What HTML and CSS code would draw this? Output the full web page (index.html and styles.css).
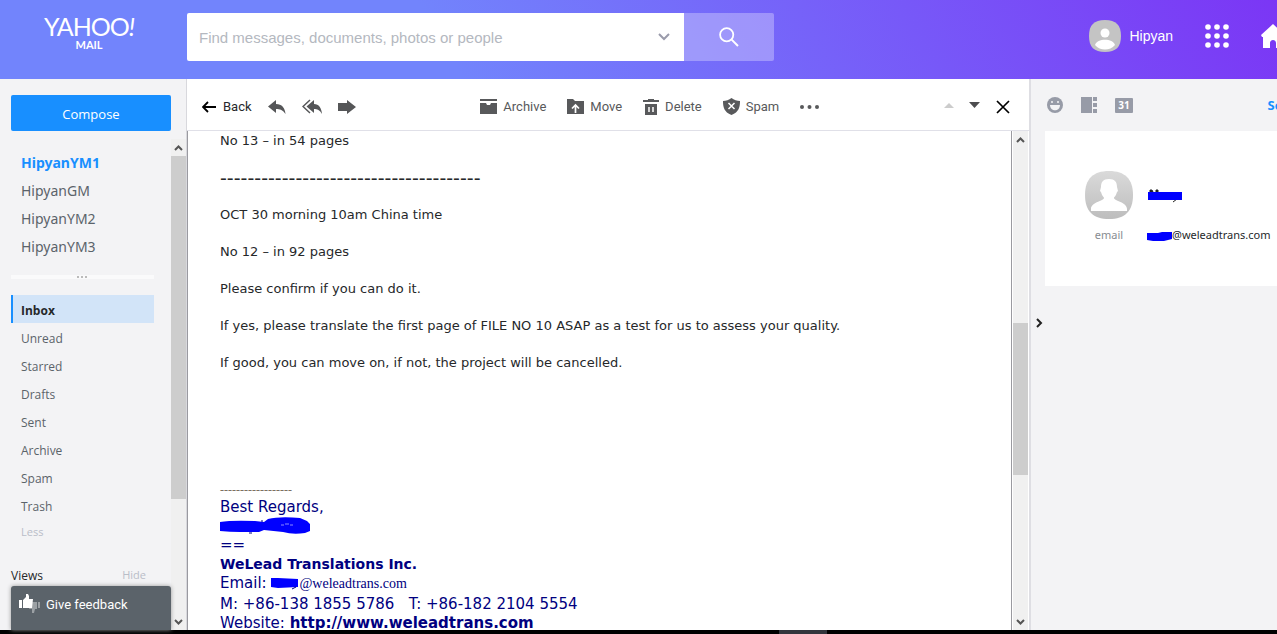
FILE: index.html
```html
<!DOCTYPE html>
<html lang="en">
<head>
  <meta charset="UTF-8" />
  <meta name="viewport" content="width=device-width, initial-scale=1.0" />
  <title>Yahoo Mail</title>
  <link rel="stylesheet" href="styles.css">
</head>
<body>
  <header class="topbar">
    <a class="logo" href="#">
      <span class="logo-name">YAHOO<i>!</i></span>
      <span class="logo-sub">MAIL</span>
    </a>
    <form class="search">
      <input type="text" aria-label="Search" placeholder="Find messages, documents, photos or people">
      <button type="button" class="search-options" aria-label="Search options">
        <svg width="12" height="8" viewBox="0 0 12 8"><path d="M1 1l5 5 5-5" fill="none" stroke="#9a9bab" stroke-width="2"/></svg>
      </button>
      <button type="button" class="search-go" aria-label="Search">
        <svg width="20" height="20" viewBox="0 0 20 20" fill="none" stroke="#fff" stroke-width="1.8"><circle cx="7.7" cy="7.7" r="6.6"/><path d="M12.4 12.4l6.6 6.6" stroke-width="2"/></svg>
      </button>
    </form>
    <div class="account">
      <a class="user" href="#">
        <svg width="32" height="32" viewBox="0 0 32 32"><path d="M16 0C27 0 32 5 32 16S27 32 16 32 0 27 0 16 5 0 16 0z" fill="#c4c4c4"/><circle cx="16" cy="13" r="4.5" fill="#fff"/><path d="M6 25c2-7 18-7 20 0-5 6-15 6-20 0z" fill="#fff"/></svg>
        <span>Hipyan</span>
      </a>
      <button type="button" class="apps" aria-label="Apps">
        <svg width="24" height="24" viewBox="0 0 24 24" fill="#fff"><circle cx="3" cy="3" r="2.800"/><circle cx="12" cy="3" r="2.800"/><circle cx="21" cy="3" r="2.800"/><circle cx="3" cy="12" r="2.800"/><circle cx="12" cy="12" r="2.800"/><circle cx="21" cy="12" r="2.800"/><circle cx="3" cy="21" r="2.800"/><circle cx="12" cy="21" r="2.800"/><circle cx="21" cy="21" r="2.800"/></svg>
      </button>
      <a class="home" href="#" aria-label="Home">
        <svg width="24" height="24" viewBox="0 0 24 24"><path d="M12 0L0 11l1 2h1v11h7v-5c0-4 6-4 6 0v5h7V13h1l1-2z" fill="#fff"/></svg>
      </a>
    </div>
  </header>

  <div class="columns">
    <aside class="sidebar">
      <button type="button" class="compose">Compose</button>
      <div class="folders">
        <nav class="folder-list">
          <ul class="mailboxes">
            <li><a class="current" href="#">HipyanYM1</a></li>
            <li><a href="#">HipyanGM</a></li>
            <li><a href="#">HipyanYM2</a></li>
            <li><a href="#">HipyanYM3</a></li>
          </ul>
          <div class="handle"><svg width="11" height="3" viewBox="0 0 11 3" fill="#bbb"><path d="M0 0h2v2H0zM4 0h2v2H4zM8 0h2v2H8z"/></svg></div>
          <ul class="system">
            <li><a class="current" href="#">Inbox</a></li>
            <li><a href="#">Unread</a></li>
            <li><a href="#">Starred</a></li>
            <li><a href="#">Drafts</a></li>
            <li><a href="#">Sent</a></li>
            <li><a href="#">Archive</a></li>
            <li><a href="#">Spam</a></li>
            <li><a href="#">Trash</a></li>
            <li><a class="less" href="#">Less</a></li>
          </ul>
          <div class="views"><span>Views</span><a href="#">Hide</a></div>
        </nav>
        <div class="scrollbar folders-scroll">
          <svg class="arrow" width="9" height="6" viewBox="0 0 9 6"><path d="M1 5l3.500-3.500L8 5" /></svg>
          <div class="track"><div class="thumb"></div></div>
          <svg class="arrow" width="9" height="6" viewBox="0 0 9 6"><path d="M1 1l3.500 3.500L8 1"/></svg>
        </div>
      </div>
      <button type="button" class="feedback">
        <svg width="21" height="20" viewBox="0 0 21 20"><path d="M12 8h6v7h-2l-1 4h-2v-4h-3zM19 8h2v6h-2z" fill="#9ba0a4"/><path d="M0 6h3v8H0zM4 6l3-3V0h2l1 2v3h4l-1 9H4z" fill="#fff"/></svg>
        <span>Give feedback</span>
      </button>
    </aside>

    <main class="reader">
      <div class="toolbar">
        <div class="tools reply-tools">
          <button type="button" class="back"><svg width="14" height="12" viewBox="0 0 14 12" fill="none" stroke="#000" stroke-width="1.800"><path d="M14 6H1.500M6 1L1 6l5 5"/></svg><span>Back</span></button>
          <button type="button" aria-label="Reply"><svg width="18" height="16" viewBox="0 0 18 16" fill="#555658"><path d="M8 1v4c6 0 9 4 9.500 10C15 11 12 10 8 10v4L0 7.500z"/></svg></button>
          <button type="button" aria-label="Reply all"><svg width="20" height="16" viewBox="0 0 20 16" fill="#555658"><path d="M12 1v4c5 0 7.500 4 8 10-2-4-5-5-8-5v4L4.500 7.500z"/><path d="M8 1L1 7.500 8 14" fill="none" stroke="#555658" stroke-width="1.500"/></svg></button>
          <button type="button" aria-label="Forward"><svg width="18" height="14" viewBox="0 0 18 14" fill="#555658"><path d="M0 3h9V0l9 7-9 7v-3H0z"/></svg></button>
        </div>
        <div class="tools action-tools">
          <button type="button"><svg width="17" height="15" viewBox="0 0 17 15" fill="#58595b"><path d="M0 0h17v2H0zM0 4h6l1 2h3l1-2h6v11H0z"/></svg><span>Archive</span></button>
          <button type="button"><svg width="17" height="15" viewBox="0 0 17 15" fill="#58595b"><path d="M0 0h6l2 2h9v13H0z"/><path d="M8.500 14V7M5 9.500L8.500 6 12 9.500" fill="none" stroke="#fff" stroke-width="1.700"/></svg><span>Move</span></button>
          <button type="button"><svg width="16" height="16" viewBox="0 0 16 16" fill="#58595b"><path d="M0 1h5V0h6v1h5v2H0zM2 5h12v11H2z"/><path d="M6 8v5M10 8v5" stroke="#fff" stroke-width="1.500"/></svg><span>Delete</span></button>
          <button type="button"><svg width="17" height="17" viewBox="0 0 17 17" fill="#58595b"><path d="M8.500 0C11 2 14 3 17 3c0 6-1 11-8.500 14C1 14 0 9 0 3c3 0 6-1 8.500-3z"/><path d="M5.500 5l6 6M11.500 5l-6 6" stroke="#fff" stroke-width="1.500"/></svg><span>Spam</span></button>
          <button type="button" aria-label="More"><svg width="19" height="4" viewBox="0 0 19 4" fill="#58595b"><circle cx="2" cy="2" r="2"/><circle cx="9.500" cy="2" r="2"/><circle cx="17" cy="2" r="2"/></svg></button>
        </div>
        <div class="tools page-tools">
          <button type="button" aria-label="Previous"><svg width="10" height="10" viewBox="0 0 10 10"><path d="M5 1l5 5H0z" fill="#ccc"/></svg></button>
          <button type="button" aria-label="Next"><svg width="12" height="10" viewBox="0 0 12 10"><path d="M0 0h11L5.500 6z" fill="#4d4d4f"/></svg></button>
          <button type="button" aria-label="Close"><svg width="14" height="14" viewBox="0 0 14 14"><path d="M1 1l12 12M13 1L1 13" stroke="#000" stroke-width="1.700"/></svg></button>
        </div>
      </div>
      <div class="message-wrap">
        <article class="message">
          <p>No 13 – in 54 pages</p>
          <p class="rule">--------------------------------------</p>
          <p>OCT 30 morning 10am China time</p>
          <p>No 12 – in 92 pages</p>
          <p>Please confirm if you can do it.</p>
          <p>If yes, please translate the first page of FILE NO 10 ASAP as a test for us to assess your quality.</p>
          <p>If good, you can move on, if not, the project will be cancelled.</p>
          <div class="signature">
            <div class="sig-rule">------------------</div>
            <div>Best Regards,</div>
            <div class="sig-name"><svg width="92" height="18" viewBox="0 0 92 18"><path d="M0 5Q12 3 35 4l9 1 4-3Q60-1 80 1l7 3 3 3v7l-5 2q-12 2-22-1l-19-2-5 2H20Q10 15 0 14z" fill="#00f"/><path d="M61 8h3m1-1h4m1 1h3" stroke="#8b8bff"/><path d="M29 16h3M42 3v2" stroke="#000080"/></svg></div>
            <div>==</div>
            <div class="sig-company">WeLead Translations Inc.</div>
            <div>Email: <svg class="sig-mark" width="28" height="13" viewBox="0 0 28 13"><path d="M0 1h7l20 1v8l-20 1-7-1z" fill="#00f"/><path d="M21 12l4-2" stroke="#000080"/></svg><span class="sig-mail">@weleadtrans.com</span></div>
            <div class="sig-phone">M: +86-138 1855 5786&nbsp;&nbsp; T: +86-182 2104 5554</div>
            <div>Website: <a href="#">http://www.weleadtrans.com</a></div>
          </div>
        </article>
        <div class="scrollbar message-scroll">
          <svg class="arrow" width="9" height="6" viewBox="0 0 9 6"><path d="M1 5l3.500-3.500L8 5"/></svg>
          <div class="track"><div class="thumb"></div></div>
          <svg class="arrow" width="9" height="6" viewBox="0 0 9 6"><path d="M1 1l3.500 3.500L8 1"/></svg>
        </div>
      </div>
    </main>

    <aside class="contact">
      <div class="contact-bar">
        <button type="button" aria-label="Contacts"><svg width="16" height="16" viewBox="0 0 16 16"><circle cx="8" cy="8" r="8" fill="#979ba7"/><path d="M3 8h10c0 7-10 7-10 0z" fill="#f3f3f5"/><circle cx="5" cy="5" r="1" fill="#f3f3f5"/><circle cx="11" cy="5" r="1" fill="#f3f3f5"/></svg></button>
        <button type="button" aria-label="Notepad"><svg width="16" height="16" viewBox="0 0 16 16" fill="#979ba7"><path d="M0 0h11v16H0zM12 0h4v4h-4zM12 6h4v4h-4zM12 12h4v4h-4z"/></svg></button>
        <button type="button" class="day" aria-label="Calendar"><span>31</span></button>
        <a class="settings" href="#">Settings</a>
      </div>
      <section class="card">
        <svg class="avatar" width="48" height="48" viewBox="0 0 48 48">
          <defs><linearGradient id="grey" x2="0" y2="1"><stop stop-color="#dadada"/><stop offset="1" stop-color="#bdbdbd"/></linearGradient></defs>
          <path d="M24 0C40 0 48 8 48 24S40 48 24 48 0 40 0 24 8 0 24 0z" fill="url(#grey)"/>
          <path d="M24 8c6 0 8 3 8 8l1 4-1 1c-1 4-3 5-3 6 0 3 13 4 13 11v2H6v-2c0-7 13-8 13-11 0-1-2-2-3-6l-1-1 1-4c0-5 2-8 8-8z" fill="#fff"/>
        </svg>
        <svg class="name-mark" width="35" height="17" viewBox="0 0 35 17"><path d="M3 5V3h2l1 2zM9 5V3h2v2zM26 15l4-3" fill="#222" stroke="#222"/><path d="M1 5h34v8H1z" fill="#00f"/></svg>
        <span class="label">email</span>
        <span class="mail"><svg width="25" height="14" viewBox="0 0 25 14"><path d="M0 5h11l4-1h10v7l-8 2H6l-6-1z" fill="#00f"/></svg>@weleadtrans.com</span>
      </section>
      <button type="button" class="collapse" aria-label="Collapse"><svg width="7" height="10" viewBox="0 0 7 10"><path d="M1 1l4 4-4 4" fill="none" stroke="#222" stroke-width="2"/></svg></button>
    </aside>
  </div>
  <footer class="taskbar"><div class="task"></div></footer>
</body>
</html>
```
FILE: styles.css
```css
* {
  box-sizing: border-box;
  margin: 0;
  padding: 0;
}

body {
  display: flex;
  flex-direction: column;
  height: 100vh;
  overflow: hidden;
  background: #f3f3f5;
  color: #26282a;
  font-family: "Open Sans", sans-serif;
  font-size: 13px;
}

button {
  border: 0;
  background: none;
  font: inherit;
  color: inherit;
  cursor: pointer;
}

a {
  color: inherit;
  text-decoration: none;
}

ul {
  list-style: none;
}

svg {
  display: block;
  flex: none;
}

/* top bar */
.topbar {
  display: flex;
  flex: none;
  height: 79px;
  overflow: hidden;
  background: linear-gradient(60deg, #7284fc 35%, #7b36f5 100%);
  color: #fff;
  font-family: "Liberation Sans", sans-serif;
}

.logo {
  display: flex;
  flex-direction: column;
  align-items: center;
  flex: none;
  width: 187px;
  padding: 14px 9px 0 0;
  font-family: Lato, sans-serif;
}

.logo-name {
  font-size: 25px;
  line-height: 25px;
  letter-spacing: -1px;
}

.logo-sub {
  font-size: 11px;
  line-height: 12px;
  font-weight: bold;
}

.search {
  display: flex;
  flex: 0 1 587px;
  height: 48px;
  margin-top: 13px;
  border-radius: 2px;
  overflow: hidden;
}

.search input {
  flex: 1;
  min-width: 0;
  border: 0;
  padding: 0 12px;
  font-family: inherit;
  font-size: 15px;
}

.search input::placeholder {
  color: #b4b8c0;
}

.search-options {
  display: flex;
  align-items: center;
  padding: 0 14px;
  background: #fff;
}

.search-go {
  display: flex;
  align-items: center;
  justify-content: center;
  width: 90px;
  background: rgba(255, 255, 255, 0.3);
}

.account {
  display: flex;
  align-items: center;
  flex: none;
  height: 71px;
  margin-left: auto;
  margin-right: -8px;
}

.user {
  display: flex;
  align-items: center;
  gap: 8px;
  margin-right: 32px;
  font-size: 14px;
}

.apps {
  margin-right: 32px;
}

/* columns */
.columns {
  display: flex;
  flex: 1;
  min-height: 0;
}

.sidebar {
  position: relative;
  display: flex;
  flex-direction: column;
  flex: none;
  width: 187px;
  border-right: 1px solid #d8d8dd;
}

.compose {
  flex: none;
  height: 36px;
  margin: 16px 15px 8px 11px;
  border-radius: 2px;
  background: #188fff;
  color: #fff;
  padding-top: 2px;
}

.folders {
  display: flex;
  flex: 1;
  min-height: 0;
}

.folder-list {
  flex: 1;
  overflow: hidden;
  padding: 10px 17px 0 11px;
  color: #5b636a;
  font-size: 12px;
}

.folder-list li {
  height: 28px;
  line-height: 28px;
}

.folder-list li a {
  display: block;
  padding-left: 10px;
}

.mailboxes {
  font-family: "Noto Sans", sans-serif;
  font-size: 14px;
}

.mailboxes .current {
  color: #188fff;
  font-weight: bold;
}

.handle {
  display: flex;
  justify-content: center;
  height: 4px;
  margin: 14px 0 16px;
  padding-top: 1px;
  background: #fafafb;
}

.system li {
  line-height: 31px;
}

.folder-list .system .current {
  height: 28px;
  padding-left: 8px;
  border-left: 2px solid #188fff;
  background: #d2e4f8;
  color: #26282a;
  font-weight: bold;
}

.system .less {
  color: #b9bdc8;
  font-size: 11px;
  line-height: 26px;
}

.views {
  display: flex;
  justify-content: space-between;
  padding-right: 8px;
  margin-top: 20px;
  color: #26282a;
}

.views a {
  color: #b9bdc8;
  font-size: 11px;
}

.feedback {
  position: absolute;
  left: 11px;
  right: 15px;
  bottom: 0;
  height: 44px;
  display: flex;
  align-items: flex-start;
  gap: 6px;
  padding: 8px;
  border-radius: 3px 3px 0 0;
  background: #5b636a;
  box-shadow: 0 0 4px #999;
  color: #fff;
  font-family: Roboto, sans-serif;
  line-height: 21px;
}

/* scrollbars */
.scrollbar {
  display: flex;
  flex-direction: column;
  align-items: center;
  flex: none;
  width: 15px;
  background: #f0f0f0;
}

.arrow {
  margin: 6px 0 5px;
  fill: none;
  stroke: #555;
  stroke-width: 2;
}

.track {
  flex: 1;
  width: 100%;
}

.thumb {
  background: #cdcdcd;
}

.folders-scroll .thumb {
  height: 75%;
}

.message-scroll .track {
  padding-top: 175px;
}

.message-scroll .thumb {
  height: 152px;
}

/* reader */
.reader {
  display: flex;
  flex-direction: column;
  flex: 1;
  min-width: 0;
  background: #fff;
}

.toolbar {
  display: flex;
  align-items: center;
  justify-content: space-between;
  flex: none;
  height: 52px;
  padding: 4px 19px 0 15px;
  border-bottom: 1px solid #e0e0e8;
  color: #58595b;
  font-family: Roboto, sans-serif;
}

.tools {
  display: flex;
  align-items: center;
}

.tools button {
  display: flex;
  align-items: center;
  gap: 6px;
}

.reply-tools {
  gap: 16px;
}

.reply-tools .back {
  gap: 7px;
  color: #26282a;
}

.action-tools {
  gap: 21px;
}

.page-tools {
  gap: 15px;
}

.message-wrap {
  display: flex;
  flex: 1;
  min-height: 0;
  padding-right: 1px;
}

.message {
  flex: 1;
  overflow: hidden;
  padding: 1px 0 0 32px;
  margin-right: 1px;
  border-left: 1px solid #9a9aa0;
  border-right: 1px solid #9a9aa0;
  font-family: Verdana, "DejaVu Sans", sans-serif;
}

.message p {
  margin-bottom: 19px;
  line-height: 18px;
}

.message .rule {
  font-size: 19px;
}

.signature {
  margin-top: 110px;
  color: #000080;
  font-size: 15px;
  line-height: 19px;
}

.signature a {
  font-weight: bold;
}

.sig-rule {
  font-family: "Liberation Serif", serif;
  font-size: 12px;
  line-height: 16px;
  color: #7a7060;
}

.sig-name {
  height: 19px;
}

.sig-company {
  font-size: 14px;
  font-weight: bold;
}

.sig-mark {
  display: inline-block;
  vertical-align: -2px;
}

.sig-mail {
  font-family: "Liberation Serif", serif;
  font-size: 14px;
}

.sig-phone {
  padding-top: 2px;
}

/* contact column */
.contact {
  flex: none;
  width: 248px;
  overflow: hidden;
  border-left: 2px solid #dedee3;
}

.contact-bar {
  display: flex;
  align-items: center;
  gap: 18px;
  height: 52px;
  padding-left: 16px;
}

.day {
  width: 18px;
  height: 15px;
  border-radius: 1px;
  background: #979ba7;
  color: #fff;
  font-size: 10px;
  line-height: 15px;
  font-weight: bold;
}

.settings {
  margin-left: auto;
  margin-right: -43px;
  color: #188fff;
  font-weight: bold;
}

.card {
  display: grid;
  grid-template-columns: 48px 1fr;
  column-gap: 14px;
  row-gap: 8px;
  align-items: center;
  align-content: start;
  height: 155px;
  margin-left: 14px;
  padding: 40px 0 0 40px;
  background: #fff;
  font-family: "Noto Sans", sans-serif;
  font-size: 11px;
}

.label {
  text-align: center;
  color: #878c91;
}

.mail {
  display: flex;
  align-items: center;
  white-space: nowrap;
}

.collapse {
  margin: 32px 0 0 5px;
}

/* bottom strip */
.taskbar {
  flex: none;
  height: 4px;
  background: #000;
}

.task {
  width: 48px;
  height: 4px;
  margin-left: 61%;
  background: #33363d;
}
```
